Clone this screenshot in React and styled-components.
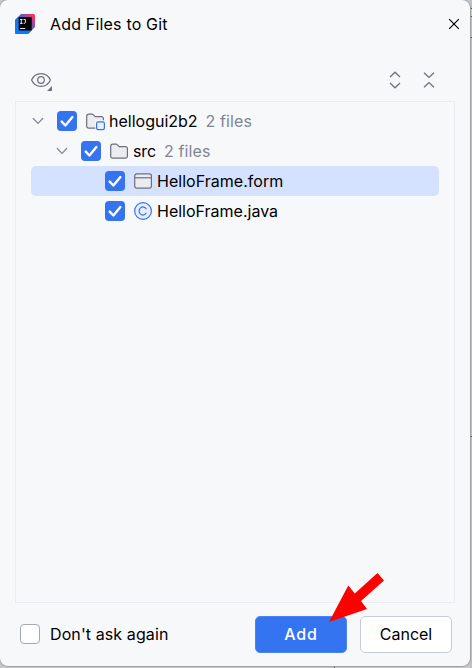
import React from "react";
import styled, { createGlobalStyle } from "styled-components";

const GlobalStyle = createGlobalStyle`
  * { box-sizing: border-box; }
  body { margin: 0; overflow: hidden; background: #c9cacc; }
`;

const Desktop = styled.main`
  position: relative;
  width: 472px;
  height: 668px;
  background: linear-gradient(90deg, #c8c8c9 0 470px, #b4b4b6 471px, #d0d0d0 472px);
  font-family: Inter, "Liberation Sans", sans-serif;
  font-size: 16px;
  color: #000;
`;

const Backdrop = styled.svg`
  position: absolute;
  inset: 0;
`;

const Dialog = styled.section`
  position: relative;
  display: flex;
  flex-direction: column;
  width: 470px;
  height: 666px;
  border-radius: 8px;
  background: #f7f8fa;
  box-shadow: 0 0 1px 1px #9fa0a3;
`;

const TitleBar = styled.header`
  display: flex;
  align-items: center;
  height: 48px;
  padding: 0 10px 0 15px;
`;

const Title = styled.h1`
  flex: 1;
  margin: 0 0 0 15px;
  font-size: 16px;
  font-weight: 400;
  line-height: 20px;
  letter-spacing: 0.18px;
`;

const IconButton = styled.button`
  display: flex;
  padding: 0;
  border: 0;
  background: none;
`;

const Toolbar = styled.div`
  display: flex;
  align-items: center;
  gap: 14px;
  height: 53px;
  padding: 17px 31px 6px 30px;
`;

const Spacer = styled.div`
  flex: 1;
`;

const Tree = styled.div`
  flex: none;
  height: 502px;
  margin: 0 15px;
  padding: 4px 15px;
  border: 1px solid #ebecf0;
`;

const Row = styled.div`
  display: flex;
  align-items: center;
  height: 30px;
  padding-left: ${(p) => p.$indent}px;
  border-radius: 5px;
  background: ${(p) => (p.$selected ? "#d4e2ff" : "transparent")};
`;

const Twisty = styled.svg`
  flex: none;
  margin-right: 12px;
`;

const CheckBox = styled.span`
  display: flex;
  flex: none;
  width: 20px;
  height: 20px;
  border: ${(p) => (p.$checked ? "0" : "1px solid #a4a9ba")};
  border-radius: 4px;
  background: ${(p) => (p.$checked ? "#3574f0" : "#fff")};
`;

const FileIcon = styled.svg`
  flex: none;
  margin: 0 4px 0 8px;
`;

const Name = styled.span`
  line-height: 20px;
  letter-spacing: ${(p) => p.$spacing || 0}px;
  white-space: nowrap;
`;

const Count = styled(Name)`
  margin-left: 8px;
  color: #818594;
`;

const Footer = styled.footer`
  display: flex;
  align-items: center;
  height: 63px;
  padding: 0 18px 0 20px;
`;

const Option = styled.label`
  display: flex;
  flex: 1;
  align-items: center;
  gap: 10px;
  margin-bottom: 1px;
`;

const Button = styled.button`
  width: 92px;
  height: 37px;
  margin-left: 13px;
  padding: 0 0 2px;
  border: 1px solid ${(p) => (p.$primary ? "#4a84f3" : "#c9ccd6")};
  border-radius: 5px;
  background: ${(p) => (p.$primary ? "#3574f0" : "#fff")};
  color: ${(p) => (p.$primary ? "#fff" : "#000")};
  font-family: inherit;
  font-size: 16px;
  font-weight: ${(p) => (p.$primary ? 500 : 400)};
  letter-spacing: ${(p) => (p.$primary ? 0.9 : 0)}px;
`;

const Pointer = styled.svg`
  position: absolute;
  left: 325px;
  top: 568px;
`;

const Logo = () => (
  <svg width="20" height="20" viewBox="0 0 20 20">
    <defs>
      <linearGradient id="edge" x1="0.1" y1="0.8" x2="0.95" y2="0.05">
        <stop offset="0.25" stopColor="#087cfa" />
        <stop offset="0.6" stopColor="#6b57ba" />
        <stop offset="0.95" stopColor="#fe315d" />
      </linearGradient>
      <linearGradient id="side" x1="0" y1="0" x2="0" y2="1">
        <stop offset="0" stopColor="#3d5fc4" />
        <stop offset="0.5" stopColor="#087cfa" />
      </linearGradient>
    </defs>
    <path d="M6 0h12.5Q20 0 20 1.5V13L13 20H1.5Q0 20 0 18.5V6Z" fill="url(#edge)" />
    <path d="M0 6 4 2.5V17H16L13 20H1.5Q0 20 0 18.5Z" fill="url(#side)" />
    <rect x="3.7" y="3.2" width="13" height="13.3" fill="#000" />
    <path d="M5 5.500h2.600M6.300 5.500V9.300M5 9.400h2.600M8.500 5.500h1.900V8.300q0 1.100-1.700 1.100M5.200 14.500h5" fill="none" stroke="#fff" strokeWidth="0.9" />
  </svg>
);

const Tick = () => (
  <svg width="20" height="20" viewBox="0 0 20 20">
    <path d="m4.7 10.6 3.7 3.9 7-8.400" fill="none" stroke="#fff" strokeWidth="2.4" strokeLinecap="round" strokeLinejoin="round" />
  </svg>
);

const Expander = () => (
  <Twisty width="14" height="14" viewBox="0 0 14 14">
    <path d="m2.3 4.5 4.7 4.8 4.7-4.8" fill="none" stroke="#818594" strokeWidth="1.2" strokeLinecap="round" />
  </Twisty>
);

const FOLDER = "M.7 4.2A2 2 0 0 1 2.7 2.2H6.2q.6 0 1 .4L9.3 4.6h6A2 2 0 0 1 17.4 6.6V14.2A2 2 0 0 1 15.4 16.2H2.7A2 2 0 0 1 .7 14.2Z";

const Kind = ({ type }) => (
  <FileIcon width="20" height="20" viewBox="-1 -1 20 20">
    {(type === "module" || type === "folder") && <path d={FOLDER} fill="#ebecf0" stroke="#6c707e" strokeWidth="1.2" />}
    {type === "module" && (
      <>
        <rect x="9.3" y="8.3" width="10" height="11" fill="#f7f8fa" />
        <rect x="10.6" y="9.8" width="7.8" height="7.8" rx="1.6" fill="#e7effd" stroke="#3574f0" strokeWidth="1.2" />
      </>
    )}
    {type === "form" && (
      <>
        <rect x=".7" y="1.8" width="16.7" height="14.4" rx="2.2" fill="#ebecf0" stroke="#6c707e" strokeWidth="1.2" />
        <path d="M.7 5.8h16.7" stroke="#6c707e" strokeWidth="1.2" />
      </>
    )}
    {type === "class" && (
      <>
        <circle cx="9" cy="9" r="8.4" fill="#e7effd" stroke="#3574f0" strokeWidth="1.2" />
        <path d="M12.3 7.2A3.8 4 0 1 0 12.3 10.8" fill="none" stroke="#3574f0" strokeWidth="1.25" />
      </>
    )}
  </FileIcon>
);

const rows = [
  { name: "hellogui2b2", type: "module", indent: 0, count: "2 files", open: true },
  { name: "src", type: "folder", indent: 24, count: "2 files", open: true, spacing: -0.1 },
  { name: "HelloFrame.form", type: "form", indent: 74, selected: true, spacing: 0.03 },
  { name: "HelloFrame.java", type: "class", indent: 74 },
];

export default function App() {
  return (
    <Desktop>
      <GlobalStyle />
      <Backdrop width="472" height="668">
        <path d="M469 8h3v8h-3Z" fill="#b5dfb5" />
        <path d="M468 8.5h4M468 16.5h4M468 37.5h4M468 436.5h4M334.5 665v3" stroke="#4b4d55" />
      </Backdrop>
      <Dialog>
        <TitleBar>
          <Logo />
          <Title>Add Files to Git</Title>
          <IconButton aria-label="Close">
            <svg width="12" height="12" viewBox="0 0 12 12">
              <path d="m1.2 1.2 9.6 9.6m0-9.6-9.6 9.6" stroke="#000" strokeWidth="1.15" />
            </svg>
          </IconButton>
        </TitleBar>
        <Toolbar>
          <IconButton aria-label="View options">
            <svg width="24" height="22" viewBox="0 0 24 22">
              <path d="M1.6 11C3.3 7 7 4.6 11 4.6S18.7 7 20.4 11C18.7 15 15 17.4 11 17.4S3.3 15 1.6 11Z" fill="none" stroke="#6c707e" strokeWidth="1.25" />
              <circle cx="11" cy="11" r="3.3" fill="none" stroke="#6c707e" strokeWidth="1.25" />
              <path d="M22 17v5h-5Z" fill="#6c707e" />
            </svg>
          </IconButton>
          <Spacer />
          <IconButton aria-label="Expand all">
            <svg width="20" height="20" viewBox="0 0 20 20">
              <path d="m5 7 5-4.8L15 7M5 13l5 4.8L15 13" fill="none" stroke="#6c707e" strokeWidth="1.25" />
            </svg>
          </IconButton>
          <IconButton aria-label="Collapse all">
            <svg width="20" height="20" viewBox="0 0 20 20">
              <path d="m5 2.7 5 4.8 5-4.8M5 17.3l5-4.8 5 4.8" fill="none" stroke="#6c707e" strokeWidth="1.25" />
            </svg>
          </IconButton>
        </Toolbar>
        <Tree>
          {rows.map((r) => (
            <Row key={r.name} $indent={r.indent} $selected={r.selected}>
              {r.open && <Expander />}
              <CheckBox $checked><Tick /></CheckBox>
              <Kind type={r.type} />
              <Name $spacing={r.spacing}>{r.name}</Name>
              {r.count && <Count $spacing={0.1}>{r.count}</Count>}
            </Row>
          ))}
        </Tree>
        <Footer>
          <Option>
            <CheckBox />
            <Name $spacing={0.1}>Don't ask again</Name>
          </Option>
          <Button $primary>Add</Button>
          <Button>Cancel</Button>
        </Footer>
      </Dialog>
      <Pointer width="64" height="60" viewBox="325 568 64 60">
        <path d="m329 622 19.3-36.500 6.5 8 22.7-20.500 6.5 7.500-23 20.500 6 8Z" fill="#f00" />
      </Pointer>
    </Desktop>
  );
}
